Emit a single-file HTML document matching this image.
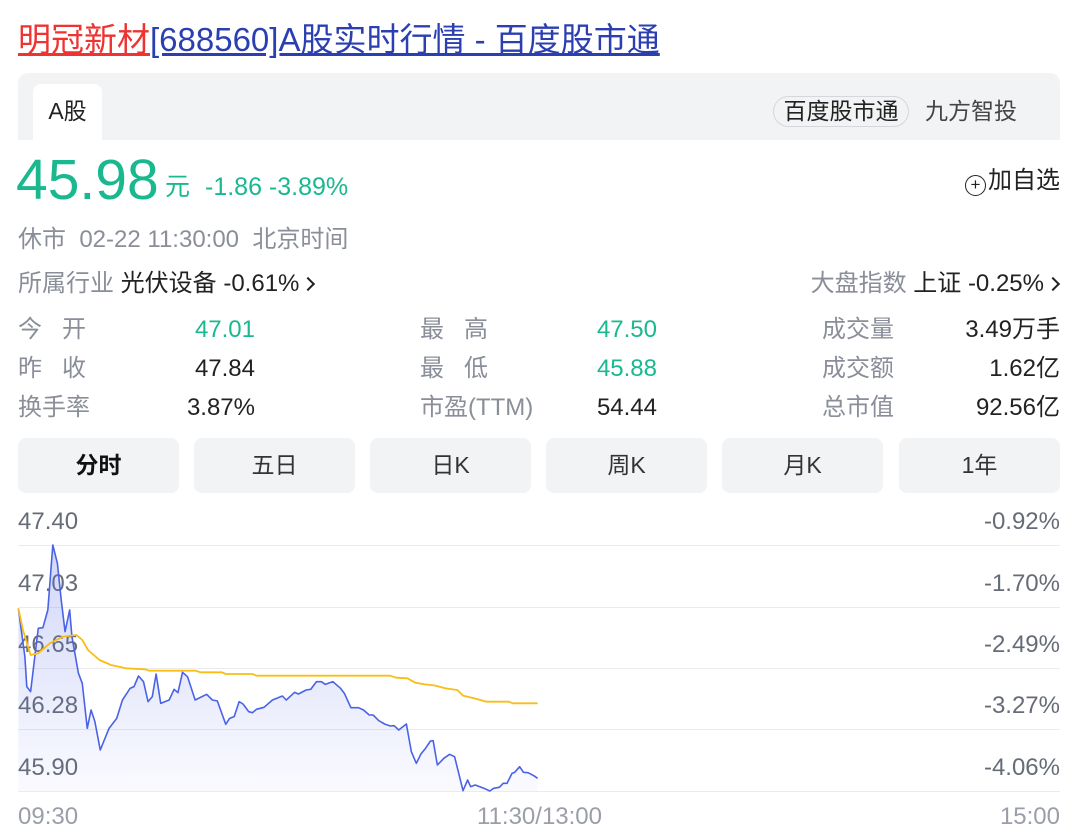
<!DOCTYPE html>
<html><head><meta charset="utf-8"><style>
*{margin:0;padding:0;box-sizing:border-box}
body{width:1080px;height:839px;background:#fff;font-family:"Liberation Sans","Noto Sans CJK SC",sans-serif;position:relative;overflow:hidden;color:#222}
.a{position:absolute;white-space:nowrap}
.g{color:#8a8e99}
.gr{color:#19b88f}
.r{text-align:right}
.btn{position:absolute;top:438px;height:55px;width:161px;background:#f2f3f5;border-radius:8px;font-size:23px;line-height:55px;text-align:center;color:#333}
.gl{position:absolute;left:18px;width:1042px;height:1px;background:#ebebeb}
.yl{position:absolute;left:18px;font-size:24px;color:#666c77}
.yr{position:absolute;right:20px;font-size:24px;color:#666c77}
.ch{display:inline-block;width:10px;height:10px;border-top:2px solid #222;border-right:2px solid #222;transform:rotate(45deg);margin-left:4px;vertical-align:2px}
</style></head><body>
<div class="a" style="left:18px;top:19px;font-size:33px;line-height:42px;"><span style="color:#e33;text-decoration:underline">明冠新材</span><span style="color:#2b3fb0;text-decoration:underline">[688560]A股实时行情 - 百度股市通</span></div>
<div class="a" style="left:18px;top:73px;width:1042px;height:67px;background:#f2f3f5;border-radius:10px 10px 0 0"></div>
<div class="a" style="left:33px;top:84px;width:69px;height:56px;background:#fff;border-radius:8px 8px 0 0;font-size:23px;line-height:54px;text-align:center">A股</div>
<div class="a" style="left:773px;top:96px;width:136px;height:31px;border:1px solid #d5d7dc;border-radius:16px;font-size:23px;line-height:29px;text-align:center">百度股市通</div>
<div class="a" style="left:925px;top:96px;font-size:23px;line-height:31px;color:#444">九方智投</div>
<div class="a gr" style="left:16px;top:150px;font-size:57px;line-height:60px">45.98</div>
<div class="a gr" style="left:165px;top:172px;font-size:25px;line-height:30px">元</div>
<div class="a gr" style="left:205px;top:172px;font-size:25px;line-height:30px">-1.86 -3.89%</div>
<div class="a" style="right:20px;top:166px;font-size:24px;line-height:30px"><span style="display:inline-block;width:21px;height:21px;border:1.5px solid #222;border-radius:50%;font-size:17px;line-height:17px;text-align:center;vertical-align:-2px;margin-right:2px">+</span>加自选</div>
<div class="a g" style="left:18px;top:225px;font-size:24px;line-height:30px">休市&nbsp; 02-22 11:30:00&nbsp; 北京时间</div>
<div class="a" style="left:18px;top:269px;font-size:24px;line-height:30px"><span class="g">所属行业</span> 光伏设备 -0.61%<span class="ch"></span></div>
<div class="a" style="right:22px;top:269px;font-size:24px;line-height:30px"><span class="g">大盘指数</span> 上证 -0.25%<span class="ch"></span></div>
<div style="font-size:24px;line-height:30px">
<div class="a g" style="left:18px;top:315px">今&nbsp;&nbsp;&nbsp;开</div>
<div class="a g" style="left:18px;top:354px">昨&nbsp;&nbsp;&nbsp;收</div>
<div class="a g" style="left:18px;top:393px">换手率</div>
<div class="a gr r" style="right:825px;top:315px">47.01</div>
<div class="a r" style="right:825px;top:354px">47.84</div>
<div class="a r" style="right:825px;top:393px">3.87%</div>
<div class="a g" style="left:420px;top:315px">最&nbsp;&nbsp;&nbsp;高</div>
<div class="a g" style="left:420px;top:354px">最&nbsp;&nbsp;&nbsp;低</div>
<div class="a g" style="left:420px;top:393px">市盈(TTM)</div>
<div class="a gr r" style="right:423px;top:315px">47.50</div>
<div class="a gr r" style="right:423px;top:354px">45.88</div>
<div class="a r" style="right:423px;top:393px">54.44</div>
<div class="a g" style="left:822px;top:315px">成交量</div>
<div class="a g" style="left:822px;top:354px">成交额</div>
<div class="a g" style="left:822px;top:393px">总市值</div>
<div class="a r" style="right:20px;top:315px">3.49万手</div>
<div class="a r" style="right:20px;top:354px">1.62亿</div>
<div class="a r" style="right:20px;top:393px">92.56亿</div>
</div>
<div class="btn" style="left:18px;font-weight:bold;color:#111">分时</div>
<div class="btn" style="left:194px">五日</div>
<div class="btn" style="left:370px">日K</div>
<div class="btn" style="left:546px">周K</div>
<div class="btn" style="left:722px">月K</div>
<div class="btn" style="left:899px">1年</div>
<div class="gl" style="top:545px"></div><div class="gl" style="top:607px"></div><div class="gl" style="top:668px"></div><div class="gl" style="top:729px"></div><div class="gl" style="top:791px"></div>
<div class="yl" style="top:508px">47.40</div><div class="yl" style="top:570px">47.03</div><div class="yl" style="top:631px">46.65</div><div class="yl" style="top:692px">46.28</div><div class="yl" style="top:754px">45.90</div>
<div class="yr" style="top:508px">-0.92%</div><div class="yr" style="top:570px">-1.70%</div><div class="yr" style="top:631px">-2.49%</div><div class="yr" style="top:692px">-3.27%</div><div class="yr" style="top:754px">-4.06%</div>
<svg class="a" style="left:0;top:500px" width="600" height="339" viewBox="0 0 1568 1017" preserveAspectRatio="none">
<defs><linearGradient id="f" x1="0" y1="0" x2="0" y2="1"><stop offset="0" stop-color="#5b6ee8" stop-opacity=".28"/><stop offset="1" stop-color="#5b6ee8" stop-opacity=".03"/></linearGradient></defs>
<path fill="url(#f)" d="M48,325 L65,470 70,560 80,575 92,460 100,385 112,383 125,330 138,135 150,190 160,300 170,395 182,330 188,410 205,520 215,550 228,685 238,630 248,665 262,750 285,685 305,655 320,600 340,565 350,560 362,528 375,545 387,605 398,590 408,522 420,610 442,600 455,568 465,578 477,517 490,530 510,600 540,583 555,600 568,603 590,673 600,655 612,650 625,605 635,612 650,635 660,638 670,628 690,622 712,600 738,588 748,600 770,577 780,582 800,570 812,568 827,545 840,545 850,553 870,545 890,565 900,580 917,623 937,623 950,630 965,645 975,645 990,662 1005,672 1020,678 1030,677 1042,690 1062,672 1075,755 1088,790 1100,762 1112,745 1125,723 1132,722 1143,795 1160,775 1175,763 1188,770 1210,872 1222,840 1230,860 1242,855 1265,865 1280,873 1290,865 1305,862 1315,850 1325,850 1338,820 1345,817 1358,800 1368,817 1380,818 1395,827 1405,835 L1405,873 L48,873Z"/>
<path fill="none" stroke="#4a63e6" stroke-width="4.5" stroke-linejoin="round" vector-effect="non-scaling-stroke" style="stroke-width:1.6px" d="M48,325 L65,470 70,560 80,575 92,460 100,385 112,383 125,330 138,135 150,190 160,300 170,395 182,330 188,410 205,520 215,550 228,685 238,630 248,665 262,750 285,685 305,655 320,600 340,565 350,560 362,528 375,545 387,605 398,590 408,522 420,610 442,600 455,568 465,578 477,517 490,530 510,600 540,583 555,600 568,603 590,673 600,655 612,650 625,605 635,612 650,635 660,638 670,628 690,622 712,600 738,588 748,600 770,577 780,582 800,570 812,568 827,545 840,545 850,553 870,545 890,565 900,580 917,623 937,623 950,630 965,645 975,645 990,662 1005,672 1020,678 1030,677 1042,690 1062,672 1075,755 1088,790 1100,762 1112,745 1125,723 1132,722 1143,795 1160,775 1175,763 1188,770 1210,872 1222,840 1230,860 1242,855 1265,865 1280,873 1290,865 1305,862 1315,850 1325,850 1338,820 1345,817 1358,800 1368,817 1380,818 1395,827 1405,835"/>
<path fill="none" stroke="#f8be16" stroke-linejoin="round" vector-effect="non-scaling-stroke" style="stroke-width:1.8px" d="M48,325 L60,390 80,465 100,460 130,430 165,410 200,405 215,420 230,450 260,480 290,495 330,505 380,508 390,512 510,512 525,517 580,517 590,522 660,522 670,527 1020,527 1035,533 1065,535 1085,548 1110,553 1135,556 1165,565 1195,570 1210,587 1240,595 1270,605 1330,605 1340,610 1405,610"/>
</svg>
<div class="a" style="left:18px;top:803px;font-size:24px;color:#9a9ea8">09:30</div>
<div class="a" style="left:477px;top:803px;font-size:24px;color:#9a9ea8">11:30/13:00</div>
<div class="a" style="right:20px;top:803px;font-size:24px;color:#9a9ea8">15:00</div>
</body></html>
